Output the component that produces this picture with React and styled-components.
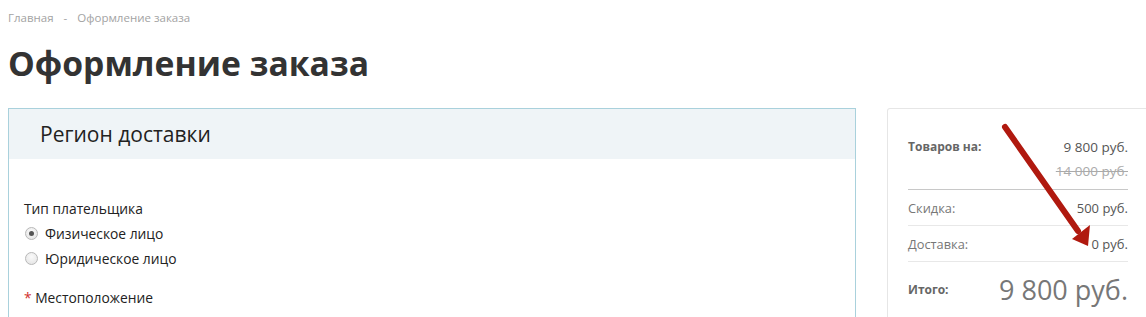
import React from "react";
import styled, { createGlobalStyle } from "styled-components";

const Global = createGlobalStyle`
  html, body { margin: 0; padding: 0; background: #fff; overflow: hidden; }
  body { font-family: "Open Sans", "Liberation Sans", sans-serif; color: #333; }
`;

const Page = styled.div`
  width: 1146px;
  height: 317px;
  padding: 0 0 0 8px;
  box-sizing: border-box;
  overflow: hidden;
`;

const Breadcrumb = styled.div`
  display: flex;
  gap: 10px;
  padding-top: 9px;
  height: 18px;
  font-size: 11.5px;
  line-height: 18px;
  color: #a3a3a3;
`;

const Title = styled.h1`
  margin: 14px 0 0;
  font-family: "Open Sans", "Liberation Sans", sans-serif;
  font-weight: 700;
  font-size: 33.7px;
  line-height: 44px;
  color: #333;
`;

const Main = styled.div`
  position: relative;
  display: flex;
  align-items: flex-start;
  gap: 31px;
  margin-top: 23px;
`;

const Panel = styled.section`
  width: 848px;
  height: 260px;
  box-sizing: border-box;
  border: 1px solid #a9d1dc;
  border-bottom: none;
  flex-shrink: 0;
`;

const PanelHead = styled.div`
  height: 50px;
  background: #eff4f7;
  display: flex;
  align-items: center;
  padding-left: 31px;
  font-size: 21px;
  color: #222;
`;

const PanelBody = styled.div`
  padding: 40px 15px 0;
  font-size: 13.8px;
  color: #222;
`;

const FieldLabel = styled.div`
  line-height: 20px;
  height: 20px;
  margin-top: ${(p) => p.$mt || 0}px;
  margin-bottom: ${(p) => p.$mb || 0}px;
`;

const Req = styled.span`
  color: #d0312d;
`;

const RadioRow = styled.label`
  display: flex;
  align-items: center;
  gap: 7px;
  height: 25px;
  padding-left: 1px;
`;

const RadioDot = styled.span`
  width: 11px;
  height: 11px;
  border-radius: 50%;
  border: 1px solid #b8b8b8;
  background: radial-gradient(circle at 50% 35%, #fafafa 0%, #e2e2e2 100%);
  display: flex;
  align-items: center;
  justify-content: center;
  &::after {
    content: "";
    width: 5px;
    height: 5px;
    border-radius: 50%;
    background: ${(p) => (p.$checked ? "#555" : "transparent")};
  }
`;

const Summary = styled.aside`
  width: 262px;
  height: 260px;
  box-sizing: border-box;
  border: 1px solid #e6e6e6;
  border-bottom: none;
  border-radius: 3px 3px 0 0;
  padding: 26px 20px 0;
  flex-shrink: 0;
`;

const Row = styled.div`
  display: flex;
  justify-content: space-between;
  align-items: ${(p) => (p.$center ? "center" : "flex-start")};
  padding: ${(p) => p.$pad || "0"};
  border-bottom: ${(p) => (p.$line ? `1px solid ${p.$line}` : "none")};
`;

const Label = styled.span`
  font-size: ${(p) => (p.$bold ? "12px" : "12.8px")};
  font-weight: ${(p) => (p.$bold ? 700 : 400)};
  color: ${(p) => (p.$bold ? "#666" : "#777")};
  line-height: 24px;
`;

const Values = styled.div`
  display: flex;
  flex-direction: column;
  align-items: flex-end;
`;

const Value = styled.span`
  font-size: ${(p) => (p.$big ? "13.5px" : "13px")};
  line-height: 24px;
  color: ${(p) => (p.$old ? "#aaa" : "#555")};
  text-decoration: ${(p) => (p.$old ? "line-through" : "none")};
`;

const Total = styled.span`
  font-size: 27px;
  line-height: 40px;
  color: #777;
`;

const Arrow = styled.svg`
  position: absolute;
  left: 982px;
  top: 10px;
  pointer-events: none;
`;

export default function App() {
  return (
    <Page>
      <Global />
      <Breadcrumb>
        <span>Главная</span>
        <span>-</span>
        <span>Оформление заказа</span>
      </Breadcrumb>
      <Title>Оформление заказа</Title>
      <Main>
        <Panel>
          <PanelHead>Регион доставки</PanelHead>
          <PanelBody>
            <FieldLabel $mb={2}>Тип плательщика</FieldLabel>
            <RadioRow>
              <RadioDot $checked />
              Физическое лицо
            </RadioRow>
            <RadioRow>
              <RadioDot />
              Юридическое лицо
            </RadioRow>
            <FieldLabel $mt={17}>
              <Req>*</Req> Местоположение
            </FieldLabel>
          </PanelBody>
        </Panel>
        <Summary>
          <Row $pad="0 0 6px" $line="#c8c8c8">
            <Label $bold>Товаров на:</Label>
            <Values>
              <Value $big>9&nbsp;800 руб.</Value>
              <Value $big $old>14&nbsp;000 руб.</Value>
            </Values>
          </Row>
          <Row $pad="6px 0 5px" $line="#e8e8e8">
            <Label>Скидка:</Label>
            <Value>500 руб.</Value>
          </Row>
          <Row $pad="6px 0 5px" $line="#e8e8e8">
            <Label>Доставка:</Label>
            <Value>0 руб.</Value>
          </Row>
          <Row $pad="8px 0" $center>
            <Label $bold>Итого:</Label>
            <Total>9 800 руб.</Total>
          </Row>
        </Summary>
        <Arrow width="120" height="140" viewBox="0 0 120 140">
          <line x1="15" y1="9" x2="88" y2="113" stroke="#b0190f" strokeWidth="6" strokeLinecap="round" />
          <polygon points="98,128 82,121 100,107" fill="#b0190f" />
        </Arrow>
      </Main>
    </Page>
  );
}
